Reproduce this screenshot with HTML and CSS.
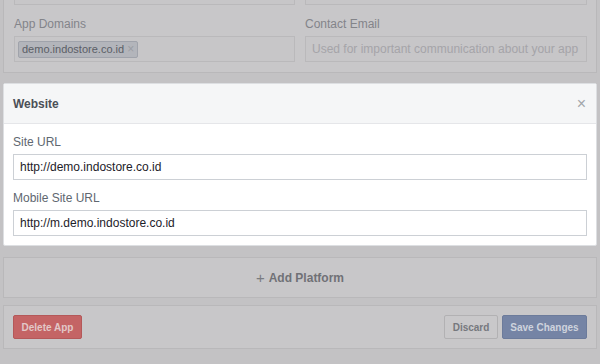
FILE: index.html
```html
<!DOCTYPE html>
<html>
<head>
<meta charset="utf-8">
<link rel="stylesheet" href="styles.css">
</head>
<body>
<div class="page">
  <section class="card dim basic">
    <div class="grid">
      <div class="field">
        <div class="dinput"></div>
      </div>
      <div class="field">
        <div class="dinput"></div>
      </div>
      <div class="field">
        <div class="label dim-label">App Domains</div>
        <div class="dinput tags"><span class="tag">demo.indostore.co.id <span class="tag-x">×</span></span></div>
      </div>
      <div class="field">
        <div class="label dim-label">Contact Email</div>
        <div class="dinput placeholder">Used for important communication about your app</div>
      </div>
    </div>
  </section>

  <section class="website">
    <header class="wh">
      <span class="wtitle">Website</span>
      <span class="wclose">×</span>
    </header>
    <div class="wbody">
      <div class="label">Site URL</div>
      <div class="input">http://demo.indostore.co.id</div>
      <div class="label second">Mobile Site URL</div>
      <div class="input">http://m.demo.indostore.co.id</div>
    </div>
  </section>

  <section class="card dim addp">
    <span class="plus">+</span> Add Platform
  </section>

  <section class="card dim footer">
    <button class="btn del">Delete App</button>
    <div class="right">
      <button class="btn disc">Discard</button>
      <button class="btn save">Save Changes</button>
    </div>
  </section>
</div>
</body>
</html>
```

FILE: styles.css
```css
html, body {
  margin: 0;
  padding: 0;
  background: #c3c2c4;
  font-family: "Liberation Sans", Arial, sans-serif;
  font-size: 12px;
}
.page {
  padding: 0 3px 20px;
  overflow: hidden;
}
.card {
  border: 1px solid #b9b8ba;
  background: #c8c7c9;
}
.basic {
  margin-top: -32px;
  padding: 10px 9px 10px 10px;
}
.grid {
  display: grid;
  grid-template-columns: 281px 282px;
  column-gap: 10px;
  row-gap: 11px;
}
.label {
  font-size: 12px;
  line-height: 14px;
  color: #606770;
  margin-bottom: 5px;
}
.dim-label {
  color: #838489;
  margin-top: 1px;
  margin-bottom: 5px;
}
.dinput {
  height: 24px;
  border: 1px solid #bab9bb;
  background: #c7c6c8;
  display: flex;
  align-items: center;
  padding: 0 6px;
}
.placeholder {
  color: #a5a4a8;
  font-size: 12px;
}
.tags {
  padding: 0 3px;
}
.tag {
  display: inline-flex;
  align-items: center;
  height: 15px;
  padding: 0 3px;
  background: #b3b5bb;
  border: 1px solid #a0a3ab;
  border-radius: 2px;
  color: #5b5e66;
  font-size: 11px;
  gap: 3px;
}
.tag-x {
  color: #9b9da3;
  font-size: 12px;
}
.website {
  margin-top: 10px;
  background: #fff;
  border: 1px solid #dddfe2;
  border-radius: 2px;
}
.wh {
  height: 39px;
  background: #f5f6f7;
  border-bottom: 1px solid #e5e6e9;
  display: flex;
  align-items: center;
  justify-content: space-between;
  padding: 0 10px 0 9px;
}
.wtitle {
  font-weight: bold;
  font-size: 12px;
  color: #4b4f56;
}
.wclose {
  color: #a3a6ab;
  font-size: 16px;
  line-height: 1;
}
.wbody {
  padding: 11px 9px 9px 9px;
}
.input {
  height: 24px;
  border: 1px solid #ccd0d5;
  display: flex;
  align-items: center;
  padding: 0 6px;
  color: #1d2129;
  font-size: 12px;
}
.label.second {
  margin-top: 11px;
}
.addp {
  margin-top: 11px;
  height: 39px;
  display: flex;
  align-items: center;
  justify-content: center;
  font-weight: bold;
  font-size: 12px;
  color: #707176;
}
.plus {
  font-weight: normal;
  font-size: 15px;
  margin-right: 4px;
  color: #7a7b80;
}
.footer {
  margin-top: 7px;
  height: 42px;
  display: flex;
  align-items: center;
  justify-content: space-between;
  padding: 0 9px;
}
.right {
  display: flex;
  gap: 4px;
}
.btn {
  height: 24px;
  font-family: "Liberation Sans", Arial, sans-serif;
  font-weight: bold;
  font-size: 10px;
  border-radius: 2px;
  padding: 0;
  margin: 0;
  box-sizing: border-box;
}
.del {
  width: 69px;
  background: #c46465;
  border: 1px solid #b45859;
  color: #e2c8c8;
}
.disc {
  width: 54px;
  background: #c9c8ca;
  border: 1px solid #b2b1b3;
  color: #76787e;
}
.save {
  width: 85px;
  background: #7584a5;
  border: 1px solid #6c7b9b;
  color: #ced3dd;
}
```
